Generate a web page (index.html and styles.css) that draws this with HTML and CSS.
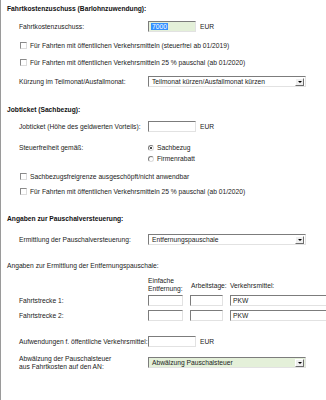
FILE: index.html
```html
<!DOCTYPE html>
<html lang="de">
<head>
<meta charset="utf-8">
<title>Fahrtkosten</title>
<link rel="stylesheet" href="styles.css">
</head>
<body>
<div class="page">
  <div class="heading">Fahrtkostenzuschuss (Barlohnzuwendung):</div>
  <div class="row m8">
    <span class="label">Fahrtkostenzuschuss:</span>
    <span class="input money green"><span class="selected">7000</span></span>
    <span class="unit">EUR</span>
  </div>
  <div class="row m8"><span class="checkbox"></span><span>Für Fahrten mit öffentlichen Verkehrsmitteln (steuerfrei ab 01/2019)</span></div>
  <div class="row m6"><span class="checkbox"></span><span>Für Fahrten mit öffentlichen Verkehrsmitteln 25 % pauschal (ab 01/2020)</span></div>
  <div class="row m8">
    <span class="label">Kürzung im Teilmonat/Ausfallmonat:</span>
    <span class="select"><span class="value">Teilmonat kürzen/Ausfallmonat kürzen</span><span class="drop"></span></span>
  </div>

  <div class="heading m19">Jobticket (Sachbezug):</div>
  <div class="row m7">
    <span class="label">Jobticket (Höhe des geldwerten Vorteils):</span>
    <span class="input money"></span>
    <span class="unit">EUR</span>
  </div>
  <div class="radio-block m10">
    <span class="label">Steuerfreiheit gemäß:</span>
    <div class="radios">
      <div class="radio-row"><span class="radio checked"></span><span>Sachbezug</span></div>
      <div class="radio-row"><span class="radio"></span><span>Firmenrabatt</span></div>
    </div>
  </div>
  <div class="row m7"><span class="checkbox"></span><span>Sachbezugsfreigrenze ausgeschöpft/nicht anwendbar</span></div>
  <div class="row m4"><span class="checkbox"></span><span>Für Fahrten mit öffentlichen Verkehrsmitteln 25 % pauschal (ab 01/2020)</span></div>

  <div class="heading m18">Angaben zur Pauschalversteuerung:</div>
  <div class="row m11">
    <span class="label">Ermittlung der Pauschalversteuerung:</span>
    <span class="select"><span class="value">Entfernungspauschale</span><span class="drop"></span></span>
  </div>
  <div class="subheading m17">Angaben zur Ermittlung der Entfernungspauschale:</div>
  <div class="table-head m7">
    <span class="label"></span>
    <span class="col-dist">Einfache<br>Entfernung:</span>
    <span class="col-days">Arbeitstage:</span>
    <span class="col-mode">Verkehrsmittel:</span>
  </div>
  <div class="row m2">
    <span class="label">Fahrtstrecke 1:</span>
    <span class="input dist"></span>
    <span class="input days"></span>
    <span class="input mode">PKW</span>
  </div>
  <div class="row m4">
    <span class="label">Fahrtstrecke 2:</span>
    <span class="input dist"></span>
    <span class="input days"></span>
    <span class="input mode">PKW</span>
  </div>
  <div class="row m15">
    <span class="label">Aufwendungen f. öffentliche Verkehrsmittel:</span>
    <span class="input money"></span>
    <span class="unit">EUR</span>
  </div>
  <div class="row tall m8">
    <span class="label two-line">Abwälzung der Pauschalsteuer<br>aus Fahrtkosten auf den AN:</span>
    <span class="select green"><span class="value">Abwälzung Pauschalsteuer</span><span class="drop"></span></span>
  </div>
</div>
</body>
</html>
```

FILE: styles.css
```css
html, body {
  margin: 0;
  padding: 0;
  background: #ffffff;
}
body {
  font-family: "Liberation Sans", Arial, sans-serif;
  font-size: 6.7px;
  color: #222222;
}
.page {
  box-sizing: border-box;
  width: 326px;
  height: 400px;
  overflow: hidden;
  border-left: 1px solid #9a9a9a;
  padding-top: 5px;
}
.heading {
  height: 8px;
  line-height: 8px;
  padding-left: 6px;
  font-weight: bold;
  color: #111111;
  white-space: nowrap;
}
.subheading {
  height: 8px;
  line-height: 8px;
  padding-left: 6px;
  white-space: nowrap;
}
.row {
  display: flex;
  align-items: center;
  height: 11px;
  padding-left: 18px;
  white-space: nowrap;
}
.row.tall {
  height: 15px;
}
.label {
  flex: none;
  width: 129px;
}
.two-line {
  line-height: 7.5px;
}
.m2 { margin-top: 2px; }
.m4 { margin-top: 4px; }
.m6 { margin-top: 6px; }
.m7 { margin-top: 7px; }
.m8 { margin-top: 8px; }
.m10 { margin-top: 10px; }
.m11 { margin-top: 11px; }
.m15 { margin-top: 15px; }
.m17 { margin-top: 17px; }
.m18 { margin-top: 18px; }
.m19 { margin-top: 19px; }

.input {
  box-sizing: border-box;
  flex: none;
  display: flex;
  align-items: center;
  height: 11px;
  border: 1px solid;
  border-color: #7c7c7c #e2e2e2 #e2e2e2 #7c7c7c;
  background: #ffffff;
  padding-left: 2px;
  line-height: 9px;
}
.green {
  background: #e4f0d9;
}
.money {
  width: 48px;
}
.unit {
  margin-left: 4px;
}
.selected {
  background: #3390ff;
  color: #ffffff;
  padding: 0 1px;
  line-height: 7px;
}
.dist {
  width: 35px;
}
.days {
  width: 33px;
  margin-left: 7px;
}
.mode {
  width: 100px;
  margin-left: 7px;
}

.select {
  box-sizing: border-box;
  flex: none;
  display: flex;
  align-items: center;
  justify-content: space-between;
  width: 158px;
  height: 11px;
  border: 1px solid;
  border-color: #7c7c7c #e2e2e2 #e2e2e2 #7c7c7c;
  background: #ffffff;
  padding-left: 3px;
  padding-right: 1px;
}
.select.green {
  background: #e4f0d9;
}
.drop {
  box-sizing: border-box;
  position: relative;
  width: 9px;
  height: 8px;
  background: #efefef;
  border: 1px solid;
  border-color: #ffffff #6e6e6e #6e6e6e #ffffff;
}
.drop::after {
  content: "";
  position: absolute;
  left: 2px;
  top: 2px;
  border-left: 2px solid transparent;
  border-right: 2px solid transparent;
  border-top: 2px solid #000000;
}

.checkbox {
  box-sizing: border-box;
  flex: none;
  width: 7px;
  height: 7px;
  border: 1px solid;
  border-color: #8a8a8a #dcdcdc #dcdcdc #8a8a8a;
  background: #ffffff;
  margin-left: 1px;
  margin-right: 3px;
}

.radio-block {
  display: flex;
  padding-left: 18px;
  white-space: nowrap;
}
.radio-block .label {
  height: 11px;
  line-height: 11px;
}
.radios {
  display: flex;
  flex-direction: column;
}
.radio-row {
  display: flex;
  align-items: center;
  height: 11px;
}
.radio {
  box-sizing: border-box;
  position: relative;
  width: 6px;
  height: 6px;
  border-radius: 50%;
  border: 1px solid;
  border-color: #7c7c7c #dcdcdc #dcdcdc #7c7c7c;
  background: #ffffff;
  margin-right: 3px;
}
.radio.checked::after {
  content: "";
  position: absolute;
  left: 1px;
  top: 1px;
  width: 2px;
  height: 2px;
  border-radius: 50%;
  background: #111111;
}

.table-head {
  display: flex;
  align-items: center;
  height: 16px;
  padding-left: 18px;
  white-space: nowrap;
}
.col-dist {
  width: 43px;
  line-height: 8px;
}
.col-days {
  width: 39px;
}
```
